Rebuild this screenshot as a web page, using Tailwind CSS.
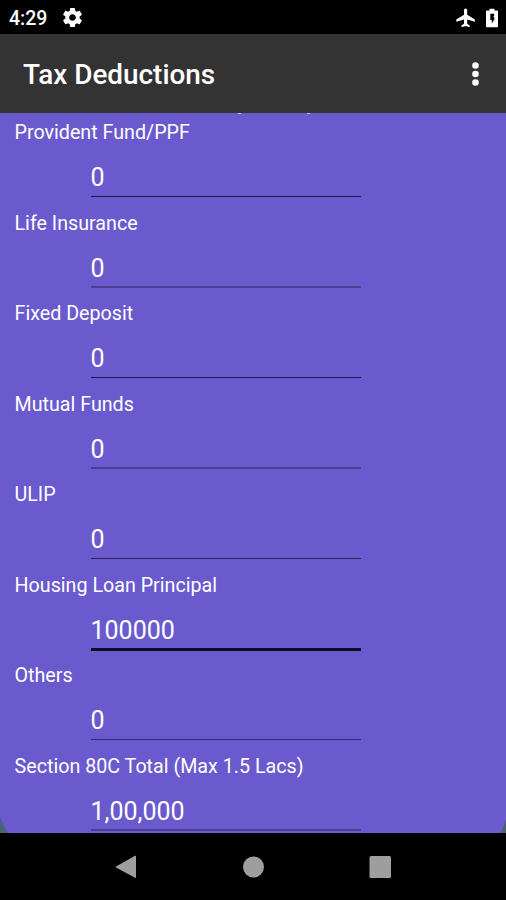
<!DOCTYPE html>
<html lang="en">

<head>
    <meta charset="UTF-8">
    <meta name="viewport" content="width=device-width, initial-scale=1.0" />
    <title>Tax Deductions</title>
    <script src="https://cdn.jsdelivr.net/npm/@tailwindcss/browser@4"></script>
</head>

<body class="bg-black">
    <div class="flex h-[900px] w-[506px] flex-col overflow-hidden font-[Roboto,sans-serif] text-white">
        <!-- Status bar -->
        <div class="flex h-[34px] shrink-0 items-center bg-black pt-px pr-[8px] pl-[9px]">
            <span class="w-[52px] pt-[2px] text-[19.500px] font-medium">4:29</span>
            <svg class="size-[23px]" viewBox="0 0 24 24" fill="#fff">
                <path d="M19.43 12.98c.04-.32.07-.64.07-.98s-.03-.66-.07-.98l2.11-1.65c.19-.15.24-.42.12-.64l-2-3.46c-.12-.22-.39-.3-.61-.22l-2.49 1c-.52-.4-1.08-.73-1.69-.98l-.38-2.65A.488.488 0 0 0 14 2h-4c-.25 0-.46.18-.49.42l-.38 2.65c-.61.25-1.17.59-1.69.98l-2.49-1c-.23-.09-.49 0-.61.22l-2 3.46c-.13.22-.07.49.12.64l2.11 1.65c-.04.32-.07.65-.07.98s.03.66.07.98l-2.11 1.65c-.19.15-.24.42-.12.64l2 3.46c.12.22.39.3.61.22l2.49-1c.52.4 1.08.73 1.69.98l.38 2.65c.03.24.24.42.49.42h4c.25 0 .46-.18.49-.42l.38-2.65c.61-.25 1.17-.59 1.69-.98l2.49 1c.23.09.49 0 .61-.22l2-3.46c.12-.22.07-.49-.12-.64l-2.11-1.65zM12 15.500c-1.930 0-3.500-1.570-3.500-3.500s1.570-3.500 3.500-3.500 3.500 1.570 3.500 3.500-1.570 3.500-3.500 3.500z" />
            </svg>
            <svg class="mr-[11px] ml-auto h-5 w-[19px]" viewBox="0 0 19 20" fill="#fff">
                <path d="M18.900 13.700v-2.100l-7.700-4.800V2a1.600 1.600 0 0 0-3.200 0v4.800L.3 11.600v2.100L8 11.400v4.400l-2.500 1.700v1.700l4.100-1.100 4.100 1.100v-1.700l-2.500-1.700v-4.400z" />
            </svg>
            <svg class="h-5 w-3" viewBox="0 0 12 20">
                <path fill="#fff" d="M3.500.8h5v1.700H11a1 1 0 0 1 1 1v14.700a1 1 0 0 1-1 1H1a1 1 0 0 1-1-1V3.500a1 1 0 0 1 1-1h2.500z" />
                <path fill="#000" d="M4.300 5.800h3.900v1.700L7.200 9.200h1.200v2L5.800 15.500v-3.400H4.300z" />
            </svg>
        </div>

        <!-- App bar -->
        <div class="flex h-[79px] shrink-0 items-center justify-between bg-[#333333] pr-[27px] pl-[23px]">
            <h1 class="pt-[2px] text-[27.900px] leading-[40px] font-medium">Tax Deductions</h1>
            <svg class="h-6 w-[7px]" viewBox="0 0 7 24" fill="#fff">
                <circle cx="3.500" cy="3.500" r="3.300" />
                <circle cx="3.500" cy="12" r="3.300" />
                <circle cx="3.500" cy="20.500" r="3.300" />
            </svg>
        </div>

        <!-- Deductions form, scrolled -->
        <div class="relative h-[720px] shrink-0 overflow-hidden bg-[#6a5acd] pt-[5px]">
            <!-- Descenders of the section heading scrolled under the app bar -->
            <span class="absolute top-0 left-[238px] h-px w-[3px] bg-white/60"></span>
            <span class="absolute top-0 left-[307px] h-px w-[3px] bg-white/60"></span>

            <div class="h-[90.500px] pl-[14.500px]">
                <div class="h-7 text-[19.700px] leading-[30px]">Provident Fund/PPF</div>
                <div class="ml-[76px] h-[51px] w-[270px] border-b-[1.500px] border-[#1c1640] pt-[14px] text-[25px] leading-[36px]">0</div>
            </div>
            <div class="h-[90.500px] pl-[14.500px]">
                <div class="h-7 text-[19.700px] leading-[30px]">Life Insurance</div>
                <div class="ml-[76px] h-[51px] w-[270px] border-b-2 border-[#4b3f94] pt-[14px] text-[25px] leading-[36px]">0</div>
            </div>
            <div class="h-[90.500px] pl-[14.500px]">
                <div class="h-7 text-[19.700px] leading-[30px]">Fixed Deposit</div>
                <div class="ml-[76px] h-[51px] w-[270px] border-b-[1.500px] border-[#1c1640] pt-[14px] text-[25px] leading-[36px]">0</div>
            </div>
            <div class="h-[90.500px] pl-[14.500px]">
                <div class="h-7 text-[19.700px] leading-[30px]">Mutual Funds</div>
                <div class="ml-[76px] h-[51px] w-[270px] border-b-2 border-[#4b3f94] pt-[14px] text-[25px] leading-[36px]">0</div>
            </div>
            <div class="h-[90.500px] pl-[14.500px]">
                <div class="h-7 text-[19.700px] leading-[30px]">ULIP</div>
                <div class="ml-[76px] h-[51px] w-[270px] border-b-[1.500px] border-[#2c2358] pt-[14px] text-[25px] leading-[36px]">0</div>
            </div>
            <div class="h-[90.500px] pl-[14.500px]">
                <div class="h-7 text-[19.700px] leading-[30px]">Housing Loan Principal</div>
                <div class="ml-[76px] h-[52px] w-[270px] border-b-[3px] border-[#0d0a24] pt-[14px] text-[25px] leading-[36px]">100000</div>
            </div>
            <div class="h-[90.500px] pl-[14.500px]">
                <div class="h-7 text-[19.700px] leading-[30px]">Others</div>
                <div class="ml-[76px] h-[51px] w-[270px] border-b-[1.500px] border-[#352b6c] pt-[14px] text-[25px] leading-[36px]">0</div>
            </div>
            <div class="h-[90.500px] pl-[14.500px]">
                <div class="h-7 text-[19.700px] leading-[30px]">Section 80C Total (Max 1.5 Lacs)</div>
                <div class="ml-[76px] h-[51px] w-[270px] border-b-2 border-[#4b3f94] pt-[14px] text-[25px] leading-[36px]">1,00,000</div>
            </div>

            <!-- Rounded bottom of the panel -->
            <svg class="absolute bottom-0 left-0 h-5 w-2" viewBox="0 0 8 20" fill="#4a6272">
                <path d="M0 4Q3 13 8 20H0z" />
            </svg>
            <svg class="absolute right-0 bottom-0 h-5 w-2" viewBox="0 0 8 20" fill="#4a6272">
                <path d="M8 6Q6 14 2.500 20H8z" />
            </svg>
        </div>

        <!-- Navigation bar -->
        <div class="flex h-[67px] shrink-0 items-center bg-black pl-[115px]">
            <svg class="h-6 w-[276px]" viewBox="0 0 276 24" fill="#9e9e9e">
                <path d="M1 11.500 20 .8q1-.5 1 .5v21q0 1-1 .5L1 12.500q-1-.5 0-1z" />
                <circle cx="138.500" cy="12" r="10.500" />
                <rect x="254.500" y="1" width="21.500" height="22" rx="1.500" />
            </svg>
        </div>
    </div>
</body>

</html>
